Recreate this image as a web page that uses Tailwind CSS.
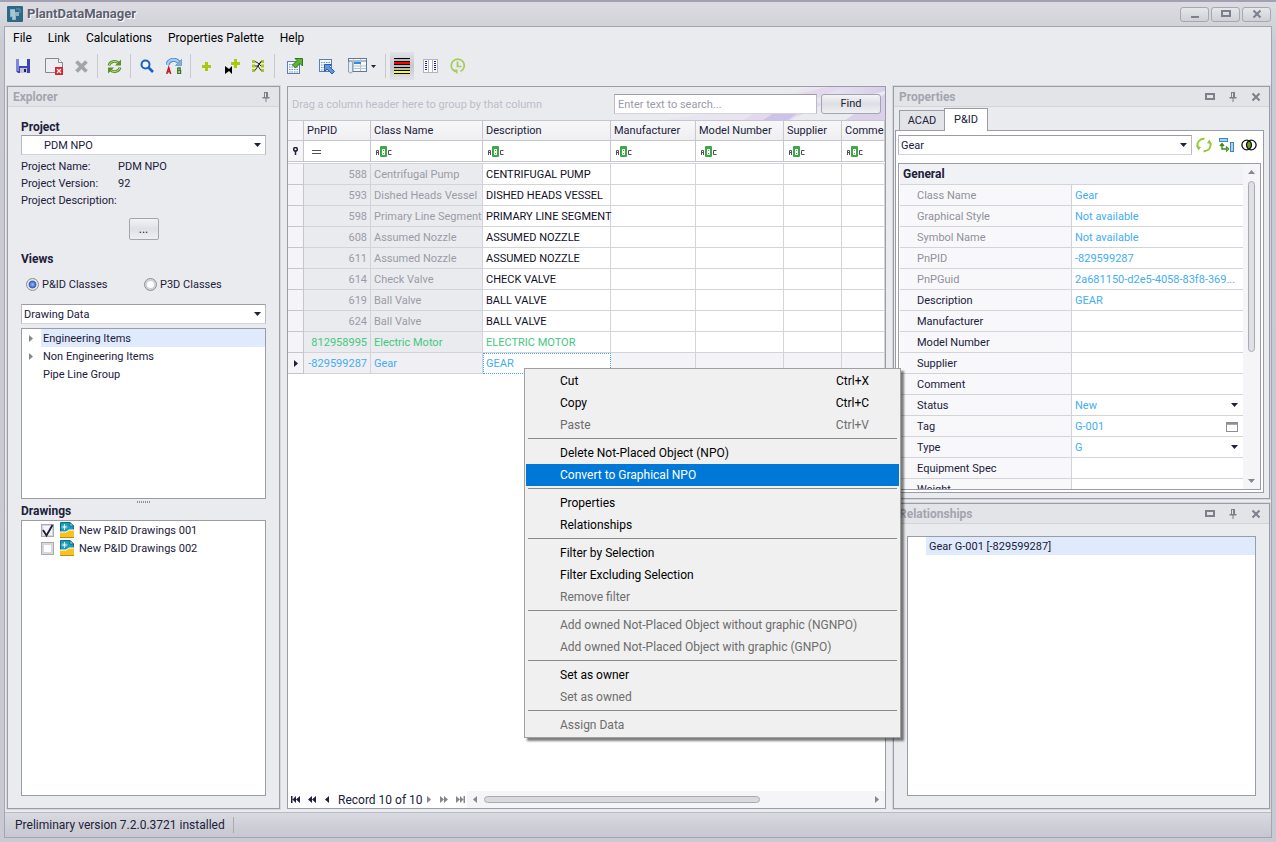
<!DOCTYPE html>
<html lang="en">
<head>
<meta charset="utf-8">
<title>PlantDataManager</title>
<script src="https://cdn.jsdelivr.net/npm/@tailwindcss/browser@4"></script>
</head>
<body class="h-screen overflow-hidden bg-[#c9c9d1] font-[Roboto,'Noto_Sans',sans-serif] text-[11px] leading-4 text-[#20203a]">

<svg class="hidden" aria-hidden="true">
  <symbol id="abc" viewBox="0 0 16 12">
    <path d="M.5 9V4.500h2V9M.5 6.500h2" fill="none" stroke="#50505c"/>
    <rect x="4" y="0" width="7" height="11" rx="1" fill="#3fa748"/>
    <path d="M6 3h3v6H6z" fill="#fff"/><path d="M7 4h1v1H7zM7 7h1v1H7z" fill="#3fa748"/>
    <path d="M15.500 4.500h-3v4h3" fill="none" stroke="#50505c"/>
  </symbol>
  <symbol id="down" viewBox="0 0 7 4"><path d="M0 0h7L3.500 4z" fill="#20203a"/></symbol>
  <symbol id="max" viewBox="0 0 10 10"><rect x="1" y="2" width="8" height="5" fill="none" stroke="#7d7f8c" stroke-width="2"/></symbol>
  <symbol id="pin" viewBox="0 0 8 10"><path d="M2 0h4v5h1.500v1.500h-3V10h-1V6.500h-3V5H2z" fill="#7d7f8c"/><path d="M3 1h1v4H3z" fill="#e3e4e8"/></symbol>
  <symbol id="close" viewBox="0 0 10 10"><path d="M1.500 1.500l7 7M8.500 1.500l-7 7" stroke="#7d7f8c" stroke-width="2"/></symbol>
  <symbol id="dwg" viewBox="0 0 14 16">
    <path d="M.5.5h9.500l3.500 3.500v11.500h-13z" fill="#1a9cc0" stroke="#0f6f80"/>
    <path d="M10 .5v3.500h3.500z" fill="#e8f4ee" stroke="#0f6f80"/>
    <path d="M4.500 2v6M1.500 5h6M3 3.500l3 3M6 3.500l-3 3" stroke="#fff" stroke-width=".8"/>
    <path d="M0 9.500h6l3-2h5v2l-7 2H0z" fill="#fff"/>
    <path d="M0 10.500h6l3-2h5V16H0z" fill="#f8c322"/><path d="M0 15.500h14" stroke="#c58a08"/>
  </symbol>
  <symbol id="expand" viewBox="0 0 4 7"><path d="M0 0l4 3.500L0 7z" fill="#85868f"/></symbol>
</svg>

<div class="relative flex h-full flex-col border-t-2 border-[#a3a1b1] bg-linear-to-b from-[#dcdce2] via-[#cacad2] via-5% to-[#c9c9d1]">
  <!-- title bar -->
  <header class="flex h-6 shrink-0 items-center pl-[7px] pr-[5px]">
    <svg class="size-4" viewBox="0 0 16 16"><rect width="16" height="16" rx="1" fill="#2f6787"/><path d="M3 3h5v3h4v4H9v4H5v-3H3z" fill="#8fb4c6"/><path d="M5 4v6M7 4v9" stroke="#c2d8e2"/><path d="M9 3h4v4" fill="none" stroke="#6d9ab2"/></svg>
    <h1 class="ml-1 text-[13px] leading-4 font-bold text-[#5c6070] [text-shadow:1px_1px_0_#ffffff]">PlantDataManager</h1>
    <div class="ml-auto flex gap-[2px]">
      <button aria-label="Minimize" class="flex h-[15px] w-[29px] items-center justify-center rounded-[3px] border border-[#a6a7b1] bg-linear-to-b from-[#e6e7ea] to-[#cfd0d6]"><svg class="size-[10px]" viewBox="0 0 10 10"><path d="M1 8h8" stroke="#7d7f8c" stroke-width="2"/></svg></button>
      <button aria-label="Maximize" class="flex h-[15px] w-[29px] items-center justify-center rounded-[3px] border border-[#a6a7b1] bg-linear-to-b from-[#e6e7ea] to-[#cfd0d6]"><svg class="size-[10px]"><use href="#max"/></svg></button>
      <button aria-label="Close" class="flex h-[15px] w-[29px] items-center justify-center rounded-[3px] border border-[#a6a7b1] bg-linear-to-b from-[#e6e7ea] to-[#cfd0d6]"><svg class="size-[10px]"><use href="#close"/></svg></button>
    </div>
  </header>

  <div class="mx-1 mb-1 flex min-h-0 flex-1 flex-col border border-[#a3a5b2] bg-[#eaebef]">
    <!-- menu -->
    <nav class="flex h-[22px] shrink-0 items-center gap-4 pl-2 text-xs text-black">
      <button>File</button><button>Link</button><button>Calculations</button><button>Properties Palette</button><button>Help</button>
    </nav>

    <!-- toolbar -->
    <div class="mb-[3px] flex h-[34px] shrink-0 items-center pl-2 text-xs" role="toolbar" aria-label="Main">
      <button aria-label="Save" class="mr-[15px] ml-[3px]"><svg class="size-[14px]" viewBox="0 0 14 14"><path d="M0 0h14v14H2l-2-2z" fill="#3e45ae"/><path d="M0 0h3v12H0z" fill="#7f86dd"/><rect x="3" y="0" width="8" height="7" fill="#e8f0fa"/><rect x="4" y="9" width="7" height="5" fill="#c3c6d2"/><rect x="8" y="10" width="2" height="3" fill="#1b1f66"/></svg></button>
      <button aria-label="Close drawing" class="mr-3"><svg class="h-[17px] w-[18px]" viewBox="0 0 18 17"><path d="M.5.500h13l4 4v10H.5z" fill="#eceef0" stroke="#84898f"/><path d="M13.500.500v4h4" fill="#fff" stroke="#84898f"/><rect x="10" y="9" width="8" height="8" fill="#d8262c"/><path d="M12 11l4 4M16 11l-4 4" stroke="#fff" stroke-width="1.200"/></svg></button>
      <button aria-label="Delete" class="mr-[9px]"><svg class="size-[13px]" viewBox="0 0 13 13"><path d="M1.500 1.500l10 10M11.500 1.500l-10 10" stroke="#a4a5aa" stroke-width="3.800"/></svg></button>
      <i class="mr-[9px] h-6 w-px bg-[#c9cad0]"></i>
      <button aria-label="Refresh" class="mr-2"><svg class="size-[15px]" viewBox="0 0 15 15"><path d="M2 6.500a5.500 5 0 0 1 9.500-2.500M13 8.500a5.500 5 0 0 1-9.500 2.500" fill="none" stroke="#5c8f2e" stroke-width="2.800"/><path d="M2 6.500a5.500 5 0 0 1 9.500-2.500M13 8.500a5.500 5 0 0 1-9.500 2.500" fill="none" stroke="#b7d67c" stroke-width="1"/><path d="M14 .5v6H8zM1 14.500v-6h6z" fill="#5c8f2e"/></svg></button>
      <i class="mr-[9px] h-6 w-px bg-[#c9cad0]"></i>
      <button aria-label="Find" class="mr-3"><svg class="size-[14px]" viewBox="0 0 14 14"><circle cx="5.500" cy="5.500" r="4" fill="#eef5ff" stroke="#1d5fc4" stroke-width="2"/><path d="M8.500 8.500l4.500 4.500" stroke="#1d5fc4" stroke-width="2.600"/></svg></button>
      <button aria-label="Replace" class="mr-2"><svg class="size-4" viewBox="0 0 16 16"><path d="M1.500 7c1-6 8-6.500 11-3" fill="none" stroke="#4a82be" stroke-width="4"/><path d="M1.500 7c1-6 8-6.500 11-3" fill="none" stroke="#a6cdf0" stroke-width="2.400"/><path d="M15.500 1.500v6h-6z" fill="#7fb0e0" stroke="#4a82be" stroke-width=".6"/><path d="M.7 16l2-6.500L4.700 16M1.500 13.700h2.500" fill="none" stroke="#c4161c" stroke-width="1.500"/><path d="M11.700 9.500v6.500M12 10h2.200v2.300H12M12 12.600h2.600v2.800H12" fill="none" stroke="#3c7a22" stroke-width="1.300"/></svg></button>
      <i class="mr-[11px] h-6 w-px bg-[#c9cad0]"></i>
      <button aria-label="Add" class="mr-[14px]"><svg class="size-[9px]" viewBox="0 0 9 9"><path d="M4.500 0v9M0 4.500h9" stroke="#a8c813" stroke-width="3"/></svg></button>
      <button aria-label="Add valve" class="mr-3"><svg class="size-[15px]" viewBox="0 0 15 15"><path d="M0 7l4 3 3-3v8l-3-3-4 3z" fill="#000"/><path d="M10.500 0v9M6 4.500h9" stroke="#a8c813" stroke-width="3"/></svg></button>
      <button aria-label="Add connection" class="mr-[10px]"><svg class="size-3" viewBox="0 0 12 12"><path d="M0 1.500h3M9 1.500h3M0 6h3M9 6h3M0 10.500h3M9 10.500h3" stroke="#a8c813" stroke-width="3"/><path d="M3 10.500l6-9M3 1.500l3 1.500 3 3M6 6l3 4.500M3 6h3l3-4.500" stroke="#111" stroke-width=".9" fill="none"/></svg></button>
      <i class="mr-3 h-6 w-px bg-[#c9cad0]"></i>
      <button aria-label="Export" class="mr-4"><svg class="size-4" viewBox="0 0 16 16"><rect x=".5" y="3.500" width="12" height="12" fill="#f4f8fd" stroke="#5b7fb0"/><path d="M2 6.500h9M2 9h9M2 11.500h9M2 14h9" stroke="#6f93c2" stroke-dasharray="1.500 1"/><path d="M8 .5h7.500v7.500l-2.500-2.500-4.500 4.500-3-3 4.500-4.500z" fill="#61b030" stroke="#2e7a14"/></svg></button>
      <button aria-label="Import" class="mr-[13px]"><svg class="size-4" viewBox="0 0 16 16"><rect x=".5" y="1.500" width="12" height="12" fill="#f4f8fd" stroke="#5b7fb0"/><path d="M2 4.500h9M2 7h9M2 9.500h9M2 12h9" stroke="#6f93c2" stroke-dasharray="1.500 1"/><path d="M5.500 6.500h7l-2 2 5 5-2.500 2.500-5-5-2.500 2.500z" fill="#5f97dc" stroke="#2b5ca4"/></svg></button>
      <button aria-label="Views" class="mr-[9px] flex items-center gap-1"><svg class="h-4 w-[19px]" viewBox="0 0 19 16"><rect x=".5" y=".5" width="18" height="13" fill="#f7f9fc" stroke="#5f7899"/><path d="M1 3h17" stroke="#5f7899"/><path d="M5.500 1v12M12.500 1v12M6 8h12M6 10.500h12" stroke="#b5c3d4"/><path d="M6 5h7" stroke="#2f8ce0" stroke-width="2"/><rect x=".5" y="3" width="4" height="12" rx="2" fill="#e6ecf4" stroke="#8ea2b8"/></svg><svg class="h-[3px] w-[5px]" viewBox="0 0 7 4"><use href="#down"/></svg></button>
      <i class="mr-1 h-6 w-px bg-[#c9cad0]"></i>
      <button aria-label="Highlight rows" class="mr-[9px] flex h-7 w-6 items-center justify-center bg-linear-to-b from-[#e2e3e7] via-[#c6c7ce] to-[#e2e3e7]"><svg class="h-4 w-4" viewBox="0 0 16 16"><rect width="16" height="16" fill="#000"/><path d="M0 2h16M0 8h16M0 11h16" stroke="#b9b9b9" stroke-width="2"/><path d="M0 5h16" stroke="#f00" stroke-width="2"/><path d="M0 14h16" stroke="#ff0" stroke-width="2"/></svg></button>
      <button aria-label="Columns" class="mr-3"><svg class="h-[14px] w-[15px]" viewBox="0 0 15 14"><rect x=".5" y=".5" width="14" height="13" fill="#fff" stroke="#b4b4b8"/><path d="M5.500 0v14M9.500 0v14" stroke="#b4b4b8"/><path d="M3 2v10M12 2v10" stroke="#1717c8" stroke-width="2" stroke-dasharray="1 1"/></svg></button>
      <button aria-label="History"><svg class="size-4" viewBox="0 0 16 16"><path d="M5 13.500a6.500 6.500 0 1 1 5.500 0" fill="none" stroke="#a6cc56" stroke-width="1.700"/><path d="M7.500 3.500v5h4" fill="none" stroke="#a6cc56" stroke-width="1.700"/><path d="M2.500 11.500h5v4.500z" fill="#a6cc56"/></svg></button>
    </div>

    <!-- panels -->
    <main class="flex min-h-0 flex-1 gap-[7px] pb-[3px] pl-[2px] pr-px">
      <!-- Explorer -->
      <section class="flex w-[273px] shrink-0 flex-col border border-[#9c9ca9] shadow-[0_0_0_1px_#d5d6dc]" aria-label="Explorer">
        <div class="flex h-5 shrink-0 items-center border-b border-[#d3d4da] bg-[#e3e4e8] pl-[5px] pr-[9px]">
          <h2 class="text-xs font-bold text-[#a3a4b0]">Explorer</h2>
          <button aria-label="Auto hide" class="ml-auto"><svg class="h-[10px] w-2"><use href="#pin"/></svg></button>
        </div>
        <div class="flex min-h-0 flex-1 flex-col px-[13px] pb-3">
          <label for="project" class="mt-3 text-xs leading-4 font-bold">Project</label>
          <div class="relative">
            <select id="project" class="block h-5 w-full appearance-none border border-t-[#9c9ca9] border-x-[#b9bac4] border-b-[#d3d4da] bg-white pt-px pl-[22px]"><option>PDM NPO</option></select>
            <svg class="pointer-events-none absolute right-[5px] top-2 h-1 w-[7px]"><use href="#down"/></svg>
          </div>
          <dl class="mt-[3px] grid grid-cols-[97px_1fr] leading-[17px]">
            <dt class="whitespace-nowrap">Project Name:</dt><dd>PDM NPO</dd>
            <dt class="whitespace-nowrap">Project Version:</dt><dd>92</dd>
            <dt class="whitespace-nowrap">Project Description:</dt><dd></dd>
          </dl>
          <button class="mt-[9px] h-[22px] w-[30px] self-center rounded-[2px] border border-[#a3a5b2] bg-linear-to-b from-[#f2f3f5] via-[#dfe0e5] to-[#eeeff2] text-xs leading-4">...</button>
          <h3 class="mt-[11px] text-xs leading-4 font-bold">Views</h3>
          <div class="mt-[9px] grid grid-cols-[118px_1fr] pl-[5px]">
            <label class="flex items-center gap-[3px]"><input type="radio" name="v" checked class="size-[13px] appearance-none rounded-full border border-[#8a8b97] bg-white bg-radial-[circle_at_center] from-[#9dbdf2] from-0% checked:via-[#3258c0] checked:via-45% checked:to-[#e4e5ea] checked:to-55%"><span class="pt-px leading-[15px]">P&amp;ID Classes</span></label>
            <label class="flex items-center gap-[3px]"><input type="radio" name="v" class="size-[13px] appearance-none rounded-full border border-[#8a8b97] bg-white shadow-[inset_0_0_0_2px_#d0d1d8]"><span class="pt-px leading-[15px]">P3D Classes</span></label>
          </div>
          <div class="relative mt-3">
            <select aria-label="View" class="block h-5 w-full appearance-none border border-t-[#9c9ca9] border-x-[#b9bac4] border-b-[#d3d4da] bg-white pt-px pl-[2px]"><option>Drawing Data</option></select>
            <svg class="pointer-events-none absolute right-[5px] top-2 h-1 w-[7px]"><use href="#down"/></svg>
          </div>
          <ul class="mt-1 h-[171px] shrink-0 border border-[#9c9ca9] bg-white leading-[17px]">
            <li class="flex items-center"><svg class="ml-[7px] mr-2 h-[7px] w-1"><use href="#expand"/></svg><span class="flex-1 bg-[#e0eafd] pt-px pl-[2px]">Engineering Items</span></li>
            <li class="flex items-center"><svg class="ml-[7px] mr-2 h-[7px] w-1"><use href="#expand"/></svg><span class="flex-1 pt-px pl-[2px]">Non Engineering Items</span></li>
            <li class="pt-px pl-[21px]">Pipe Line Group</li>
          </ul>
          <div class="flex h-1 shrink-0 items-end justify-center"><i class="h-[2px] w-[14px] bg-[repeating-linear-gradient(90deg,#8d8e9a_0_1px,transparent_1px_2px)]"></i></div>
          <h3 class="text-xs leading-4 font-bold">Drawings</h3>
          <ul class="mt-px flex-1 border border-[#9c9ca9] bg-white leading-[17px]">
            <li><label class="flex items-center pl-[19px]"><span class="relative size-[13px]"><input type="checkbox" checked class="block size-[13px] appearance-none border border-[#a9aab4] bg-[#f5f5f7] shadow-[inset_0_0_0_1px_#d6d7dd]"><svg class="pointer-events-none absolute inset-0 size-[13px]" viewBox="0 0 13 13"><path d="M2 6l3.500 5.500L11.500 1" fill="none" stroke="#1e1e35" stroke-width="1.800"/></svg></span><svg class="ml-[6px] mr-[5px] h-4 w-[14px]"><use href="#dwg"/></svg><span class="pt-px">New P&amp;ID Drawings 001</span></label></li>
            <li><label class="flex items-center pl-[19px]"><input type="checkbox" class="block size-[13px] appearance-none border border-[#a9aab4] bg-white shadow-[inset_0_0_0_2px_#d6d7dd]"><svg class="ml-[6px] mr-[5px] h-4 w-[14px]"><use href="#dwg"/></svg><span class="pt-px">New P&amp;ID Drawings 002</span></label></li>
          </ul>
        </div>
      </section>

      <!-- Data grid -->
      <section class="flex min-w-0 flex-1 flex-col overflow-hidden border border-[#9c9ca9] bg-white" aria-label="Data grid">
        <div class="relative flex h-[33px] shrink-0 items-center bg-[#eaebef] pl-1 pr-1">
          <svg class="absolute right-0 top-0 h-full w-[280px]" viewBox="0 0 280 33" preserveAspectRatio="none" aria-hidden="true">
            <defs><linearGradient id="sw" x1="0" x2="1"><stop offset="0" stop-color="#eaebef"/><stop offset="1" stop-color="#d9cdea"/></linearGradient></defs>
            <path d="M60 33Q150 20 205 0h25L150 33z" fill="#e9e4f0"/><path d="M138 33Q190 4 225 0h30L185 33z" fill="#e3d8ee"/><path d="M158 33L182 18 200 21 183 33z" fill="#cdc2e8"/><path d="M205 14L240 0h40v4L225 18z" fill="url(#sw)"/><path d="M240 33l40-26v26z" fill="#dbd0ea"/>
          </svg>
          <span class="relative pt-[2px] text-[11px] text-[#bcbdc8]">Drag a column header here to group by that column</span>
          <input type="search" aria-label="Search" placeholder="Enter text to search..." class="relative ml-auto h-5 w-[203px] border border-t-[#9c9ca9] border-x-[#b9bac4] border-b-[#d3d4da] bg-white px-[3px] pt-px text-[11px] placeholder:text-[#9a9ba8]">
          <button class="relative ml-1 h-5 w-[60px] rounded-[3px] border border-[#a3a5b2] bg-linear-to-b from-[#f4f4f6] via-[#dedfe4] to-[#f0f0f3] text-[11px]">Find</button>
        </div>
        <table class="w-full table-fixed border-separate border-spacing-0 whitespace-nowrap">
          <colgroup><col class="w-4"><col class="w-[67px]"><col class="w-[112px]"><col class="w-32"><col class="w-[85px]"><col class="w-[88px]"><col class="w-[58px]"><col></colgroup>
          <thead id="ghead"></thead>
          <tbody id="gbody"></tbody>
        </table>
        <div class="mt-auto flex h-[17px] shrink-0 items-center">
          <div class="flex w-[179px] shrink-0 items-center gap-2 pl-[3px] text-xs">
            <button aria-label="First"><svg class="h-[7px] w-[9px]" viewBox="0 0 9 7"><path d="M0 0h1.500v7H0zM5 0v7L1.500 3.500zM9 0v7L5 3.500z" fill="#20203a"/></svg></button>
            <button aria-label="Previous page"><svg class="h-[7px] w-2" viewBox="0 0 8 7"><path d="M4 0v7L0 3.500zM8 0v7L4 3.500z" fill="#20203a"/></svg></button>
            <button aria-label="Previous"><svg class="mx-px h-[7px] w-1" viewBox="0 0 4 7"><path d="M4 0v7L0 3.500z" fill="#20203a"/></svg></button>
            <span class="w-20 whitespace-nowrap">Record 10 of 10</span>
            <button aria-label="Next"><svg class="mx-px h-[7px] w-1"><use href="#expand"/></svg></button>
            <button aria-label="Next page"><svg class="h-[7px] w-2" viewBox="0 0 8 7"><path d="M0 0v7l4-3.500zM4 0v7l4-3.500z" fill="#85868f"/></svg></button>
            <button aria-label="Last"><svg class="h-[7px] w-[9px]" viewBox="0 0 9 7"><path d="M0 0v7l4-3.500zM4 0v7l3.500-3.500zM7.500 0H9v7H7.500z" fill="#85868f"/></svg></button>
          </div>
          <div class="flex h-full flex-1 items-center bg-[#f5f5f7] pl-[6px] pr-[6px]">
            <svg class="h-[7px] w-1 -scale-x-100"><use href="#expand"/></svg>
            <div class="mx-[7px] flex-1"><div class="h-[7px] w-[72%] rounded-full border border-[#a9aab6] bg-[#d9dade]"></div></div>
            <svg class="h-[7px] w-1"><use href="#expand"/></svg>
          </div>
        </div>
      </section>

      <div class="flex w-[377px] shrink-0 flex-col gap-1">
        <!-- Properties -->
        <section class="flex h-[413px] shrink-0 flex-col border border-[#9c9ca9] shadow-[0_0_0_1px_#d5d6dc]" aria-label="Properties">
          <div class="flex h-5 shrink-0 items-center border-b border-[#d3d4da] bg-[#e3e4e8] pl-[5px] pr-2">
            <h2 class="text-xs font-bold text-[#a3a4b0]">Properties</h2>
            <button aria-label="Maximize" class="ml-auto"><svg class="size-[10px]"><use href="#max"/></svg></button>
            <button aria-label="Auto hide" class="ml-[14px]"><svg class="h-[10px] w-2"><use href="#pin"/></svg></button>
            <button aria-label="Close" class="ml-[14px]"><svg class="size-[10px]"><use href="#close"/></svg></button>
          </div>
          <div class="flex h-[23px] shrink-0 items-end pl-[5px]" role="tablist">
            <button role="tab" class="h-5 w-[46px] border border-b-0 border-[#9c9ca9] bg-[#e3e4e8] pt-px">ACAD</button>
            <button role="tab" aria-selected="true" class="z-10 -mb-px -ml-px h-[23px] w-11 border border-b-0 border-[#9c9ca9] bg-white pb-px">P&amp;ID</button>
          </div>
          <div class="ml-px mr-[5px] mb-[5px] flex min-h-0 flex-1 flex-col border border-[#9c9ca9] bg-white px-[2px] pb-[2px]">
            <div class="mt-1 flex items-center">
              <div class="relative flex-1">
                <select aria-label="Object" class="block h-5 w-full appearance-none border border-t-[#9c9ca9] border-x-[#b9bac4] border-b-[#d3d4da] bg-white pt-px pl-[2px]"><option>Gear</option></select>
                <svg class="pointer-events-none absolute right-[5px] top-2 h-1 w-[7px]"><use href="#down"/></svg>
              </div>
              <button aria-label="Refresh" class="ml-1"><svg class="size-4" viewBox="0 0 16 16"><path d="M2 10.500A6.300 6.300 0 0 1 8.500 1.800M14 5.500a6.300 6.300 0 0 1-6.500 8.700" fill="none" stroke="#96c936" stroke-width="1.900"/><path d="M0 8.500l5 1.500-2.500 3.500zM16 7.500l-5-1.500 2.500-3.500z" fill="#96c936"/></svg></button>
              <button aria-label="Map properties" class="ml-[7px]"><svg class="size-[15px]" viewBox="0 0 15 15"><rect x=".5" y=".5" width="8" height="3" fill="#a9d3f2" stroke="#3f86bd"/><rect x="11.500" y="4.500" width="3" height="9" fill="#a9d3f2" stroke="#3f86bd"/><path d="M3 6v5h5M1 8l2-2.500L5 8M7 8.500l2.500 2.500L7 13.500" fill="none" stroke="#3d8a1e" stroke-width="1.400"/></svg></button>
              <button aria-label="Compare" class="ml-[7px] mr-1"><svg class="h-3 w-4" viewBox="0 0 16 12"><path d="M8 1.500a5 5 0 0 1 0 9a5 5 0 0 1 0-9z" fill="#6f9e10"/><circle cx="5.700" cy="6" r="4.800" fill="none" stroke="#111" stroke-width="1.300"/><circle cx="10.300" cy="6" r="4.800" fill="none" stroke="#111" stroke-width="1.300"/></svg></button>
            </div>
            <div class="mt-2 flex min-h-0 flex-1 overflow-hidden border border-[#9c9ca9]">
              <div class="min-w-0 flex-1 overflow-hidden pl-px">
                <h3 class="h-[21px] border-b border-[#d3d4da] bg-[#f1f2f5] pl-[3px] text-xs leading-5 font-bold">General</h3>
                <table class="w-full table-fixed border-separate border-spacing-0 whitespace-nowrap"><colgroup><col class="w-[172px]"><col></colgroup><tbody id="props"></tbody></table>
              </div>
              <div class="flex w-[17px] shrink-0 flex-col items-center bg-[#f5f5f7] py-[6px]">
                <svg class="h-1 w-[7px]" viewBox="0 0 7 4"><path d="M0 4h7L3.500 0z" fill="#85868f"/></svg>
                <div class="mt-[7px] mb-1 w-[7px] flex-1"><div class="h-[58%] rounded-full border border-[#a9aab6] bg-[#dfe0e4]"></div></div>
                <svg class="h-1 w-[7px]" viewBox="0 0 7 4"><path d="M0 0h7L3.500 4z" fill="#85868f"/></svg>
              </div>
            </div>
          </div>
        </section>
        <!-- Relationships -->
        <section class="flex min-h-0 flex-1 flex-col border border-[#9c9ca9] shadow-[0_0_0_1px_#d5d6dc]" aria-label="Relationships">
          <div class="flex h-5 shrink-0 items-center border-b border-[#d3d4da] bg-[#e3e4e8] pl-[5px] pr-2">
            <h2 class="text-xs font-bold text-[#a3a4b0]">Relationships</h2>
            <button aria-label="Maximize" class="ml-auto"><svg class="size-[10px]"><use href="#max"/></svg></button>
            <button aria-label="Auto hide" class="ml-[14px]"><svg class="h-[10px] w-2"><use href="#pin"/></svg></button>
            <button aria-label="Close" class="ml-[14px]"><svg class="size-[10px]"><use href="#close"/></svg></button>
          </div>
          <ul class="mx-[13px] mt-3 mb-3 flex-1 border border-[#9c9ca9] bg-white pl-[18px] leading-[17px]"><li class="bg-[#e0eafd] pt-px pl-[3px]">Gear G-001 [-829599287]</li></ul>
        </section>
      </div>
    </main>

    <!-- status bar -->
    <footer class="flex h-[25px] shrink-0 items-center border-t border-[#b9bac6] bg-linear-to-b from-[#d9dae0] to-[#c6c7cf] pl-[10px] text-xs">
      <span class="text-xs">Preliminary version 7.2.0.3721 installed</span><i class="ml-2 h-4 w-px bg-[#a9aab6]"></i>
    </footer>
  </div>

  <!-- context menu -->
  <div role="menu" class="absolute left-[524px] top-[366px] w-[377px] border border-[#a0a0a0] bg-[#f0f0f0] p-px text-xs leading-[22px] whitespace-nowrap text-black shadow-[3px_3px_2px_rgba(0,0,0,0.5)]" id="menu"></div>
</div>

<script>
const abc = '<svg class="ml-px h-3 w-4"><use href="#abc"/></svg>';
const heads = ['PnPID', 'Class Name', 'Description', 'Manufacturer', 'Model Number', 'Supplier', 'Comment'];
const filterKey = '<svg class="mx-auto h-2 w-[7px]" viewBox="0 0 7 8"><circle cx="3.500" cy="2.300" r="1.800" fill="none" stroke="#20203a" stroke-width="1.500"/><path d="M3.500 4v4" stroke="#20203a" stroke-width="1.500"/></svg>';
const eq = '<svg class="ml-1 h-1 w-[9px]" viewBox="0 0 9 4"><path d="M0 .5h9M0 3.500h9" stroke="#50505c"/></svg>';
document.getElementById('ghead').innerHTML =
  `<tr><th class="h-[21px] border-t border-r border-b border-[#c5c6ce] bg-[#f5f5f7]"></th>` +
  heads.map(h => `<th scope="col" class="h-[21px] overflow-hidden border-t border-b border-r border-[#c5c6ce] bg-linear-to-b from-[#f7f7f9] to-[#efeff2] pl-[3px] text-left font-normal">${h}</th>`).join('') + '</tr>' +
  `<tr><td class="h-[21px] border-b border-r border-[#c5c6ce] bg-[#f5f5f7]">${filterKey}</td>` +
  heads.map((h, i) => `<td class="h-[21px] border-b border-r border-[#c5c6ce] bg-white pt-px pl-1">${i ? abc : eq}</td>`).join('') + '</tr>' +
  '<tr><td colspan="8" class="h-[2px] border-b border-[#d3d4da]"></td></tr>';
const rows = [
  ['588', 'Centrifugal Pump', 'CENTRIFUGAL PUMP'], ['593', 'Dished Heads Vessel', 'DISHED HEADS VESSEL'],
  ['598', 'Primary Line Segment', 'PRIMARY LINE SEGMENT'], ['608', 'Assumed Nozzle', 'ASSUMED NOZZLE'],
  ['611', 'Assumed Nozzle', 'ASSUMED NOZZLE'], ['614', 'Check Valve', 'CHECK VALVE'],
  ['619', 'Ball Valve', 'BALL VALVE'], ['624', 'Ball Valve', 'BALL VALVE'],
  ['812958995', 'Electric Motor', 'ELECTRIC MOTOR'], ['-829599287', 'Gear', 'GEAR']];
document.getElementById('gbody').innerHTML = rows.map((r, i) => {
  const col = i === 9 ? 'text-[#43adf5]' : i === 8 ? 'text-[#43c87f]' : '';
  const dim = col || 'text-[#9a9ba6]';
  const last = i === 9;
  return `<tr class="${last ? 'bg-[#f4f4f6]' : 'bg-white'}">
    <td class="h-[21px] border-b border-r border-[#c5c6ce] bg-[#f5f5f7]">${last ? '<svg class="mx-auto h-[7px] w-1" viewBox="0 0 4 7"><path d="M0 0l4 3.500L0 7z" fill="#20203a"/></svg>' : ''}</td>
    <td class="h-[21px] border-b border-r border-[#d3d4da] pt-[2px] pr-[3px] text-right ${last ? 'bg-[#f0f0f3]' : 'bg-[#eaebef]'} ${dim}">${r[0]}</td>
    <td class="h-[21px] border-b border-r border-[#d3d4da] pt-[2px] pl-[3px] ${last ? 'bg-[#f0f0f3]' : 'bg-[#eaebef]'} ${dim}">${r[1]}</td>
    <td class="h-[21px] bg-white ${last ? 'border border-dotted border-[#43adf5] pl-[2px]' : 'border-b border-r border-[#d3d4da] pt-[2px] pl-[3px]'} ${col || 'text-[#101028]'}">${r[2]}</td>` +
    '<td class="h-[21px] border-b border-r border-[#d3d4da]"></td>'.repeat(4) + '</tr>';
}).join('');

const props = [
  ['Class Name', 'Gear', 1], ['Graphical Style', 'Not available', 1], ['Symbol Name', 'Not available', 1],
  ['PnPID', '-829599287', 1], ['PnPGuid', '2a681150-d2e5-4058-83f8-369...', 1], ['Description', 'GEAR'],
  ['Manufacturer', ''], ['Model Number', ''], ['Supplier', ''], ['Comment', ''], ['Status', 'New', 0, 'list'],
  ['Tag', 'G-001', 0, 'dialog'], ['Type', 'G', 0, 'list'], ['Equipment Spec', ''], ['Weight', '']];
document.getElementById('props').innerHTML = props.map(([k, v, ro, kind]) => `<tr>
  <th scope="row" class="h-[21px] border-b border-r border-[#d3d4da] bg-[#f8f8fa] pt-[2px] pl-[17px] text-left font-normal ${ro ? 'text-[#8f909b]' : 'text-[#20203a]'}">${k}</th>
  <td class="h-[21px] border-b border-[#d3d4da] bg-white pt-[2px] pl-[3px] text-[#43adf5]">${
    kind === 'list' ? `<div class="relative"><select aria-label="${k}" class="block h-4 w-full appearance-none bg-white"><option>${v}</option></select><svg class="pointer-events-none absolute right-[5px] top-[5px] h-1 w-[7px]"><use href="#down"/></svg></div>`
    : kind === 'dialog' ? `<div class="flex items-center justify-between pr-[5px]">${v}<button aria-label="Edit tag"><svg class="h-[10px] w-3" viewBox="0 0 12 10"><rect x=".5" y=".5" width="11" height="9" fill="#fff" stroke="#8d8e92"/><path d="M0 1.500h12" stroke="#8d8e92" stroke-width="2.500"/></svg></button></div>` : v}</td></tr>`).join('');

const menu = [['Cut', 'Ctrl+X'], ['Copy', 'Ctrl+C'], ['Paste', 'Ctrl+V', 1], 0,
  ['Delete Not-Placed Object (NPO)'], ['Convert to Graphical NPO', '', 0, 1], 0, ['Properties'], ['Relationships'], 0,
  ['Filter by Selection'], ['Filter Excluding Selection'], ['Remove filter', '', 1], 0,
  ['Add owned Not-Placed Object without graphic (NGNPO)', '', 1], ['Add owned Not-Placed Object with graphic (GNPO)', '', 1], 0,
  ['Set as owner'], ['Set as owned', '', 1], 0, ['Assign Data', '', 1]];
document.getElementById('menu').innerHTML = menu.map(m => m
  ? `<button role="menuitem" class="flex h-[22px] w-full items-center justify-between pl-[34px] pr-[30px] text-left ${m[3] ? 'bg-[#0078d7] text-white' : m[2] ? 'text-[#6d6d6d]' : ''}"><span>${m[0]}</span><span>${m[1] || ''}</span></button>`
  : '<div role="separator" class="mx-[2px] mt-[2px] mb-[3px] h-px bg-[#8a8a8a]"></div>').join('');
</script>
</body>
</html>
